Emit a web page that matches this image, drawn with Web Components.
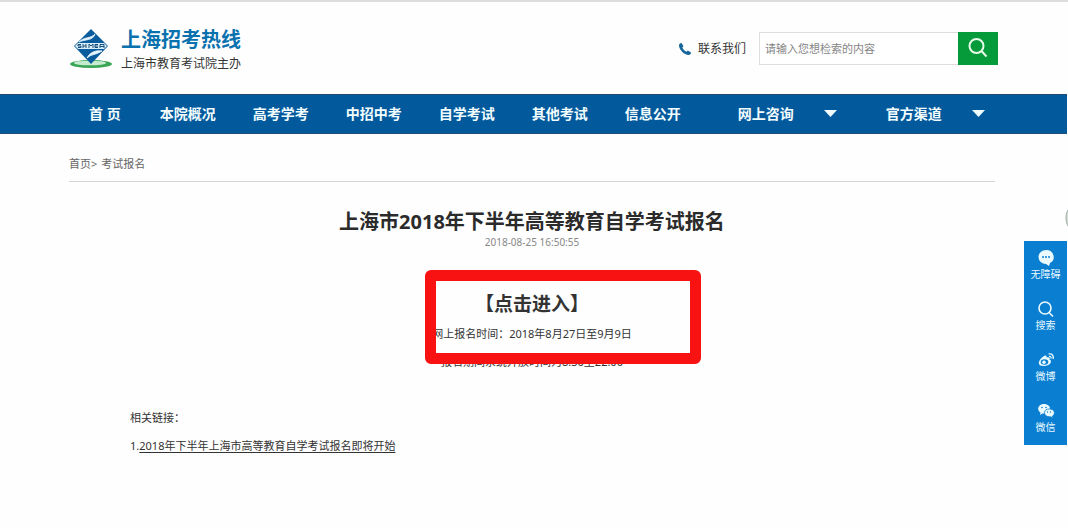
<!DOCTYPE html>
<html lang="zh-CN">
<head>
<meta charset="utf-8">
<title>上海招考热线</title>
<style>
  body { margin: 0; background: #fefefe; color: #333; font: 11px/16px "Noto Sans", "Noto Sans CJK SC", sans-serif; overflow-x: hidden; }
</style>
</head>
<body>
<hotline-page>
  <site-header></site-header>
  <site-nav></site-nav>
  <exam-notice></exam-notice>
  <side-tools></side-tools>
</hotline-page>

<script>
const define = (name, html) => {
  const template = document.createElement('template');
  template.innerHTML = html;
  customElements.define(name, class extends HTMLElement {
    constructor() {
      super();
      this.attachShadow({ mode: 'open' }).append(template.content.cloneNode(true));
    }
  });
};

define('hotline-page', `
<style>
  :host { display: block; border-top: 2px solid #dcdcdc; padding-right: 1px; }
</style>
<slot></slot>`);

define('site-logo', `
<style>
  :host { display: flex; align-items: center; gap: 8px; }
  svg { width: 44px; height: 44px; display: block; }
  div { padding-top: 4px; }
  strong { display: block; font-size: 20px; line-height: 26px; color: #0871ae; }
  span { display: block; font: 12px/20px "Noto Sans CJK SC", sans-serif; color: #333; }
</style>
<svg viewBox="0 0 44 44" aria-hidden="true">
  <ellipse cx="22" cy="38" rx="21" ry="4" fill="#3aa655"/>
  <ellipse cx="21" cy="37" rx="16" ry="2.300" fill="#c5ebd0"/>
  <path d="M22 3 39 20 22 38 5 20Z" fill="#0b5c9c"/>
  <path d="M26 8c-4 5-10 2-16 8 6-3 14-1 16-8ZM33 25c-6-1-12 1-15 7 4-4 9-3 15-7Z" fill="#e9f7ff" stroke="#e9f7ff" stroke-width=".8"/>
  <path d="M9 17h26l3 3-3 3H9l-3-3Z" fill="#d8eefa"/>
  <path d="M12 18.500H9v1.500h3v1.500H9M14 18v4m0-2h3m0-2v4M20 22v-4l2 2 2-2v4M29 18.500h-3v3h3m-3-1.500h3M31 22v-3.500h4V22m-4-1.500h4" fill="none" stroke="#164d7c"/>
</svg>
<div><strong>上海招考热线</strong><span>上海市教育考试院主办</span></div>`);

define('search-box', `
<style>
  :host { display: block; }
  form { display: flex; margin: 0; }
  input { box-sizing: border-box; width: 199px; height: 33px; margin: 0; padding: 0 5px; border: 1px solid #ddd; border-right: 0; border-radius: 0; background: #fff; font: inherit; color: #333; outline: 0; }
  input::placeholder { color: #858585; opacity: 1; }
  button { display: grid; place-items: center; width: 40px; height: 33px; padding: 0; border: 0; background: #069b3a; }
</style>
<form>
  <input type="text" aria-label="搜索" placeholder="请输入您想检索的内容">
  <button type="button" aria-label="搜索"><svg width="22" height="22" viewBox="0 0 22 22" fill="none" stroke="#e6fbe9" stroke-width="2"><circle cx="9.500" cy="9" r="7"/><path d="m14.500 14 5 5.500"/></svg></button>
</form>`);

define('site-header', `
<style>
  :host { display: flex; align-items: center; justify-content: space-between; height: 92px; padding: 0 69px; }
  .tools { display: flex; align-items: center; gap: 13px; }
  a { display: flex; align-items: center; gap: 6px; font-size: 12px; line-height: 18px; padding-top: 2px; color: #333; text-decoration: none; }
</style>
<site-logo></site-logo>
<div class="tools">
  <a href="#"><svg width="14" height="14" viewBox="0 0 14 14" fill="#17659b" aria-hidden="true"><path d="M3.500 1 5.500 4.200 4.300 5.500C5 7.300 6.700 9 8.500 9.700L9.800 8.500 13 10.500c.3 1.500-1.500 2.800-3 2.500C5.500 12 2 8.500 1 4 .7 2.500 2 .8 3.500 1Z"/></svg>联系我们</a>
  <search-box></search-box>
</div>`);

define('site-nav', `
<style>
  :host { display: block; background: #025a9d; box-shadow: inset 0 1px #1c4e75, inset 0 -1px #1c4e75; }
  nav { display: flex; align-items: center; gap: 37px; height: 40px; padding-left: 89px; }
  a { display: flex; align-items: center; color: #f2fdff; font-size: 14px; line-height: 20px; font-weight: 700; text-decoration: none; white-space: nowrap; }
  .home { margin-right: 2px; }
  .more { gap: 30px; margin-left: 20px; }
  .more + .more { margin-left: 12px; }
</style>
<nav>
  <a class="home" href="#">首 页</a><a href="#">本院概况</a><a href="#">高考学考</a><a href="#">中招中考</a><a href="#">自学考试</a><a href="#">其他考试</a><a href="#">信息公开</a>
  <a class="more" href="#">网上咨询<svg width="13" height="8" viewBox="0 0 13 8" fill="currentColor"><path d="M0 0h13L6.500 7Z"/></svg></a>
  <a class="more" href="#">官方渠道<svg width="13" height="8" viewBox="0 0 13 8" fill="currentColor"><path d="M0 0h13L6.500 7Z"/></svg></a>
</nav>`);

define('exam-notice', `
<style>
  :host { display: block; padding: 22px 72px 0 69px; }
  .crumbs { display: flex; gap: 4px; padding-bottom: 9px; border-bottom: 1px solid #d5d5d5; color: #666; }
  .crumbs a { color: inherit; text-decoration: none; }
  header { margin-top: 26px; text-align: center; }
  h1 { margin: 0; font-size: 20px; line-height: 28px; color: #2b2b2b; }
  time { display: block; font-size: 10px; line-height: 12px; color: #888; }
  .entry { position: relative; margin-top: 42px; text-align: center; }
  .enter { display: block; margin-bottom: 2px; font-size: 19px; line-height: 28px; font-weight: 700; color: #333; text-decoration: none; }
  p { margin: 0; line-height: 28px; }
  .frame { position: absolute; left: calc(50% - 107px); top: -20px; box-sizing: border-box; width: 276px; height: 94px; border: 11px solid #f91212; border-radius: 6px; pointer-events: none; }
  .related { padding: 28px 61px 0; }
  .related a { color: inherit; text-underline-offset: 2px; }
</style>
<div class="crumbs"><span><a href="#">首页</a>&gt;</span><a href="#">考试报名</a></div>
<header>
  <h1>上海市2018年下半年高等教育自学考试报名</h1>
  <time>2018-08-25 16:50:55</time>
</header>
<div class="entry">
  <a class="enter" href="#">【点击进入】</a>
  <p>网上报名时间：2018年8月27日至9月9日</p>
  <p>报名期间系统开放时间为8:30至22:00</p>
  <div class="frame"></div>
</div>
<div class="related">
  <p>相关链接：</p>
  <p>1.<a href="#">2018年下半年上海市高等教育自学考试报名即将开始</a></p>
</div>`);

define('side-tools', `
<style>
  :host { position: absolute; right: 1px; top: 241px; width: 43px; }
  nav { display: flex; flex-direction: column; gap: 19px; padding: 7px 0 12px; background: #0a7fd2; }
  a { display: flex; flex-direction: column; align-items: center; color: #eafaff; font-size: 10px; line-height: 12px; text-decoration: none; }
  svg { display: block; width: 18px; height: 20px; }
  .bubble { position: absolute; right: -1px; top: -42px; width: 3px; height: 38px; }
</style>
<svg class="bubble" viewBox="0 0 3 38" aria-hidden="true"><circle cx="18" cy="19" r="17" fill="#d5dfd8" stroke="#9aa8a0"/></svg>
<nav>
  <a href="#"><svg viewBox="0 0 18 20" fill="currentColor"><path d="M9 2a7.500 7 0 0 1 4 13l-1 3-3-2A7.500 7 0 0 1 9 2Z"/><g fill="#0a7fd2"><circle cx="6" cy="9" r="1"/><circle cx="9" cy="9" r="1"/><circle cx="12" cy="9" r="1"/></g></svg>无障碍</a>
  <a href="#"><svg viewBox="0 0 18 20" fill="none" stroke="currentColor" stroke-width="1.600"><circle cx="8" cy="9" r="6"/><path d="m12 13.500 4 4"/></svg>搜索</a>
  <a href="#"><svg viewBox="0 0 18 20"><path d="M7 6c2-1 3 0 2.500 1.500C12 6.500 13.500 8 12.500 9.500c3 1 1.500 6-5 6.500C0 16.500 0 11 7 6Z" fill="currentColor"/><ellipse cx="7.500" cy="12" rx="3.800" ry="2.800" fill="#0a7fd2"/><circle cx="7" cy="12.300" r="1.700" fill="currentColor"/><path d="M11.500 4c3.500-1 5.500 2 4.500 5M12 6.500c1.500-.3 2.300.7 2 2" stroke="currentColor" stroke-width="1.300" fill="none"/></svg>微博</a>
  <a href="#"><svg viewBox="0 0 18 20" fill="currentColor"><path d="M7 3c8 0 8 9.500 0 9.500H5.500L3 14l.5-2.500C-1 8.500 1.500 3 7 3Z"/><path d="M12 8c6.500 0 6.500 5.500 3.500 7l.3 2-2-1.200C6 16.500 5.500 8 12 8Z" stroke="#0a7fd2" stroke-width=".8"/><g fill="#0a7fd2"><circle cx="5" cy="6.500" r=".8"/><circle cx="9" cy="6.500" r=".8"/><circle cx="10.500" cy="11" r=".7"/><circle cx="13.500" cy="11" r=".7"/></g></svg>微信</a>
</nav>`);
</script>
</body>
</html>
